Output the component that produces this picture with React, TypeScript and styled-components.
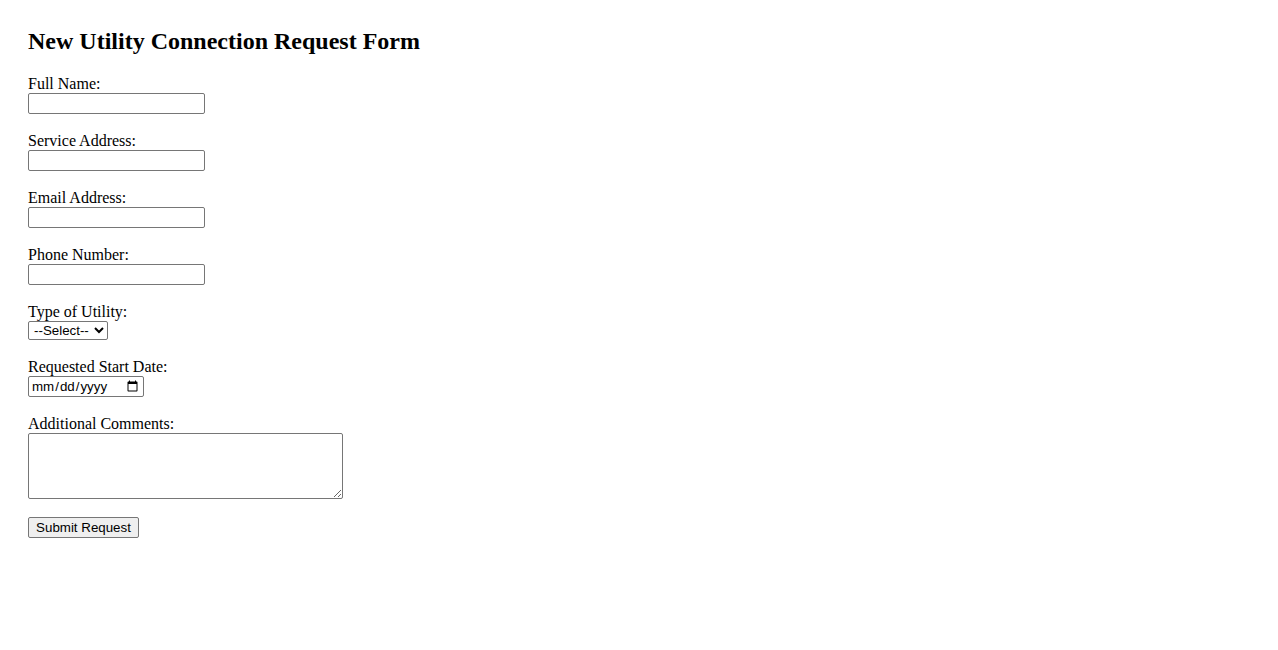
import React from "react";
import styled, { createGlobalStyle } from "styled-components";

const GlobalStyle = createGlobalStyle`
  html, body {
    margin: 0;
    background: #fff;
  }
  body {
    font-family: "Liberation Serif", "Times New Roman", serif;
    font-size: 16px;
    color: #000;
  }
`;

const Page = styled.div`
  padding: 27px 28px 28px;
`;

const Title = styled.h2`
  margin: 0 0 20px;
  font-size: 24px;
  font-weight: bold;
  line-height: 28px;
`;

const Form = styled.form`
  display: flex;
  flex-direction: column;
  align-items: flex-start;
`;

const Field = styled.div<{ $gap?: number }>`
  display: flex;
  flex-direction: column;
  align-items: flex-start;
  margin-bottom: ${(p) => p.$gap ?? 18}px;
`;

const Label = styled.label`
  display: block;
  line-height: 18px;
`;

const controlBase = `
  box-sizing: border-box;
  font-family: "Liberation Sans", Arial, sans-serif;
  font-size: 13.333px;
  border: 1px solid #767676;
  border-radius: 2px;
  background: #fff;
  color: #000;
  margin: 0;
`;

const TextInput = styled.input`
  ${controlBase}
  width: 177px;
  height: 21px;
  padding: 1px 2px;
`;

const DateInput = styled.input`
  ${controlBase}
  width: 116px;
  height: 21px;
  padding: 1px 2px;
`;

const Select = styled.select`
  ${controlBase}
  width: 80px;
  height: 19px;
  padding: 0 0 0 1px;
`;

const Comments = styled.textarea`
  ${controlBase}
  width: 315px;
  height: 66px;
  padding: 2px;
  resize: both;
`;

const SubmitButton = styled.button`
  box-sizing: border-box;
  font-family: "Liberation Sans", Arial, sans-serif;
  font-size: 13.333px;
  height: 21px;
  width: 111px;
  padding: 1px 6px;
  border: 1px solid #767676;
  border-radius: 2px;
  background: #efefef;
  color: #000;
`;

const fields = [
  { id: "fullName", label: "Full Name:", type: "text" },
  { id: "address", label: "Service Address:", type: "text" },
  { id: "email", label: "Email Address:", type: "email" },
  { id: "phone", label: "Phone Number:", type: "tel" },
];

const App: React.FC = () => (
  <Page>
    <GlobalStyle />
    <Title>New Utility Connection Request Form</Title>
    <Form onSubmit={(e) => e.preventDefault()}>
      {fields.map((f) => (
        <Field key={f.id}>
          <Label htmlFor={f.id}>{f.label}</Label>
          <TextInput id={f.id} name={f.id} type={f.type} />
        </Field>
      ))}
      <Field>
        <Label htmlFor="utility">Type of Utility:</Label>
        <Select id="utility" name="utility" defaultValue="">
          <option value="">--Select--</option>
          <option value="electricity">Electricity</option>
          <option value="water">Water</option>
          <option value="gas">Gas</option>
        </Select>
      </Field>
      <Field>
        <Label htmlFor="startDate">Requested Start Date:</Label>
        <DateInput id="startDate" name="startDate" type="date" />
      </Field>
      <Field>
        <Label htmlFor="comments">Additional Comments:</Label>
        <Comments id="comments" name="comments" />
      </Field>
      <SubmitButton type="submit">Submit Request</SubmitButton>
    </Form>
  </Page>
);

export default App;
